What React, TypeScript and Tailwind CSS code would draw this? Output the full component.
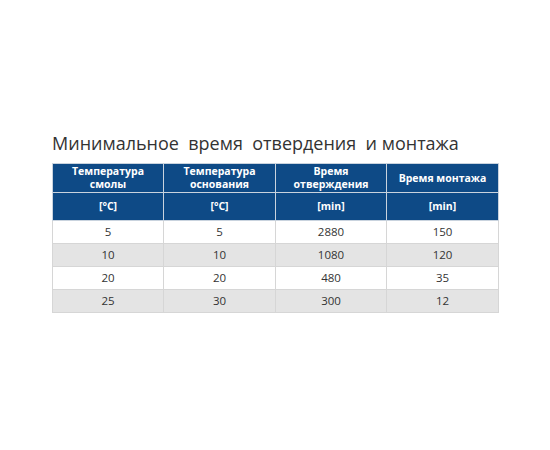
import React from 'react';

const rows = [
  ['5', '5', '2880', '150'],
  ['10', '10', '1080', '120'],
  ['20', '20', '480', '35'],
  ['25', '30', '300', '12'],
];

export default function App() {
  return (
    <div className="w-[550px] h-[450px] bg-white font-['Open_Sans',sans-serif] pt-[131px] pl-[52px]">
      <h1 className="text-[18px] text-[#333] leading-[24px] whitespace-pre">
        Минимальное  время  отвердения  и монтажа
      </h1>
      <table className="mt-[8px] w-[446px] border-collapse table-fixed text-center">
        <thead>
          <tr className="bg-[#0e4a86] text-white text-[10.5px] font-bold leading-[13px] h-[29px]">
            <th className="border border-[#c9d3de] w-[111px]">Температура<br />смолы</th>
            <th className="border border-[#c9d3de] w-[112px]">Температура<br />основания</th>
            <th className="border border-[#c9d3de] w-[111px]">Время<br />отверждения</th>
            <th className="border border-[#c9d3de] w-[112px]">Время монтажа</th>
          </tr>
          <tr className="bg-[#0e4a86] text-white text-[10.5px] font-bold h-[28px]">
            <th className="border border-[#c9d3de]">[°C]</th>
            <th className="border border-[#c9d3de]">[°C]</th>
            <th className="border border-[#c9d3de]">[min]</th>
            <th className="border border-[#c9d3de]">[min]</th>
          </tr>
        </thead>
        <tbody>
          {rows.map((r, i) => (
            <tr key={i} className={`h-[23px] text-[11.5px] text-[#333] ${i % 2 ? 'bg-[#e4e4e4]' : 'bg-white'}`}>
              {r.map((c, j) => (
                <td key={j} className="border border-[#d6d6d6] p-0">{c}</td>
              ))}
            </tr>
          ))}
        </tbody>
      </table>
    </div>
  );
}
